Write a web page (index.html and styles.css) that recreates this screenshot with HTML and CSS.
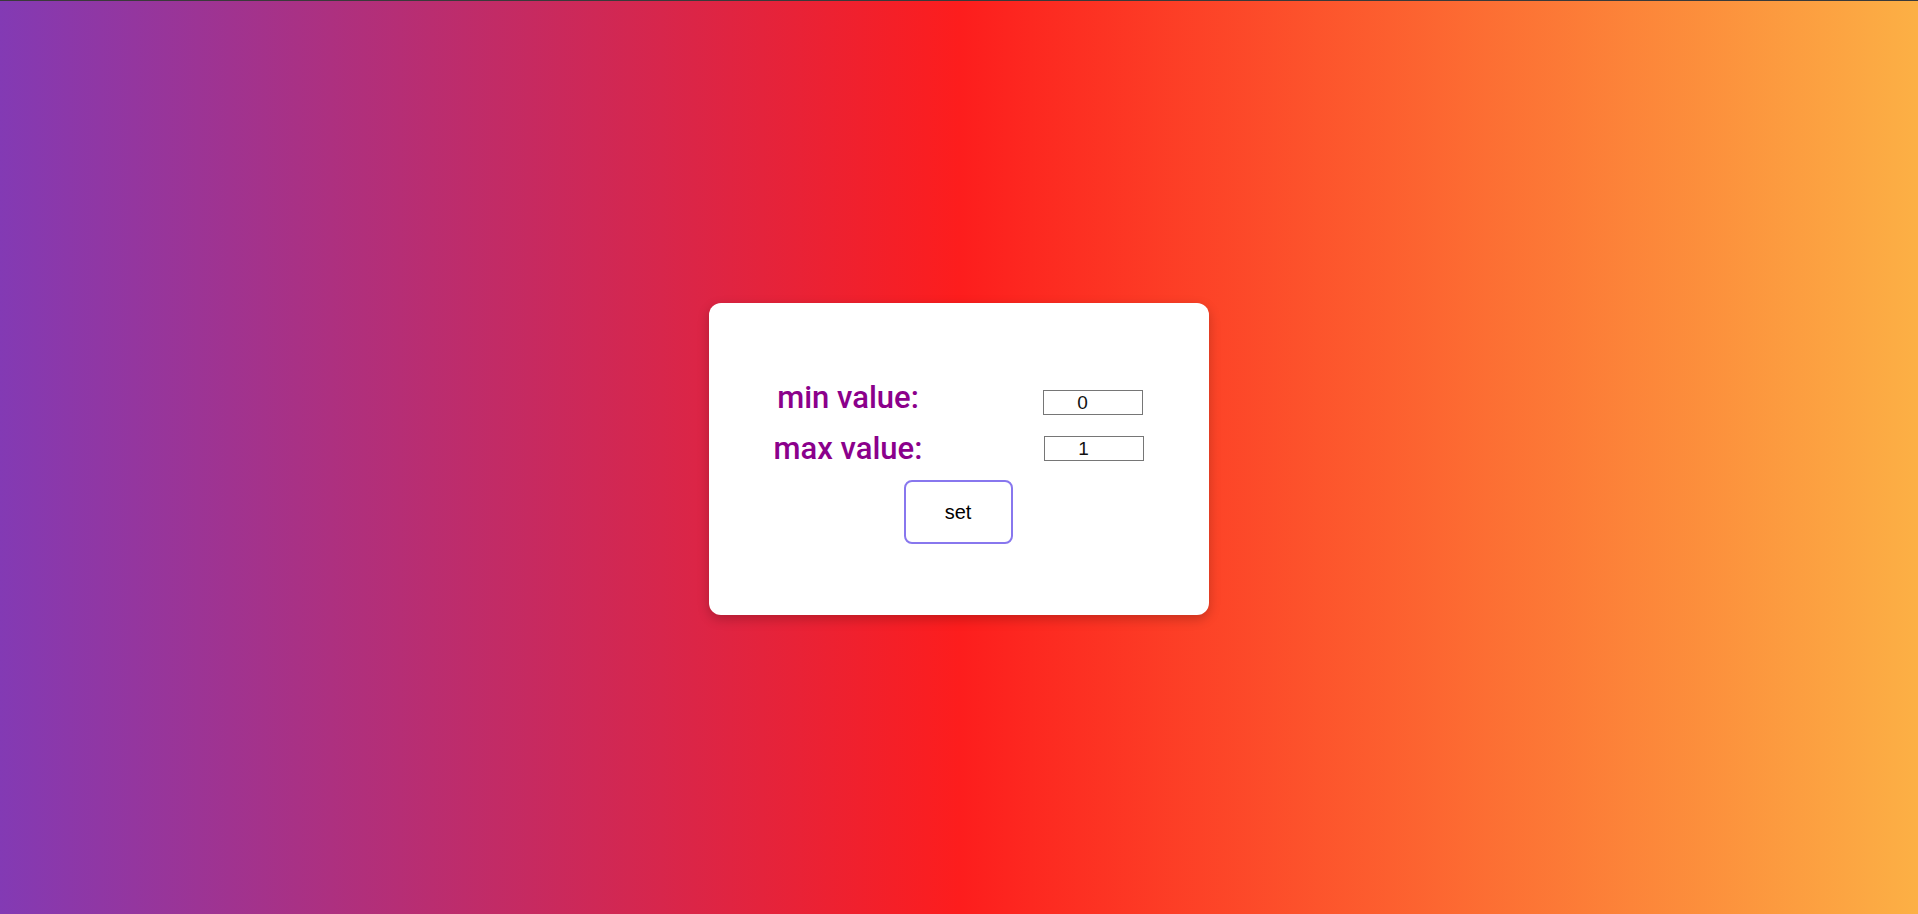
FILE: index.html
```html
<!DOCTYPE html>
<html lang="en">
<head>
<meta charset="utf-8">
<title>min max</title>
<link rel="stylesheet" href="styles.css">
</head>
<body>
<div class="topline"></div>
<main class="stage">
  <div class="card">
    <div class="form">
      <label class="label row1" for="min">min value:</label>
      <input class="field row1" id="min" type="number" value="0">
      <label class="label row2" for="max">max value:</label>
      <input class="field row2 shift" id="max" type="number" value="1">
    </div>
    <button class="btn" type="button">set</button>
  </div>
</main>
</body>
</html>
```
FILE: styles.css
```css
html, body {
  margin: 0;
  padding: 0;
  height: 100%;
}
body {
  background: linear-gradient(90deg, #833ab4 0%, #fd1d1d 50%, #fcb045 100%);
  font-family: Roboto, "Liberation Sans", sans-serif;
  display: flex;
  flex-direction: column;
  overflow: hidden;
}
.topline {
  height: 1px;
  background: #3a3a3a;
  flex: none;
}
.stage {
  flex: 1;
  display: flex;
  align-items: center;
  justify-content: center;
  padding-top: 3px;
}
.card {
  width: 500px;
  height: 312px;
  box-sizing: border-box;
  background: #fff;
  border-radius: 12px;
  box-shadow: 0 4px 12px rgba(0, 0, 0, 0.22);
  padding: 77px 0 0 0;
  display: flex;
  flex-direction: column;
}
.form {
  display: grid;
  grid-template-columns: 200px 100px;
  column-gap: 95px;
  row-gap: 15px;
  padding-left: 39px;
  align-items: start;
}
.label {
  font-size: 31px;
  font-weight: 500;
  line-height: 36px;
  color: #8b008b;
  text-align: center;
}
.field {
  box-sizing: border-box;
  width: 100px;
  height: 25px;
  border: 1px solid #767676;
  padding: 0 8px 0 2px;
  font-family: "Liberation Sans", Arial, sans-serif;
  font-size: 19px;
  color: #111;
  text-align: center;
  background: #fff;
  outline: none;
}
.field::-webkit-inner-spin-button {
  opacity: 0;
}
.field.row1 { margin-top: 10px; }
.field.row2 { margin-top: 5px; }
.field.shift { position: relative; left: 1px; }
.btn {
  align-self: center;
  margin-top: 13px;
  width: 109px;
  height: 64px;
  box-sizing: border-box;
  border: 2px solid #8877ee;
  border-radius: 8px;
  background: #fff;
  font-family: "Liberation Sans", Arial, sans-serif;
  font-size: 20px;
  color: #000;
  padding: 0;
  position: relative;
  left: -1px;
}
```
